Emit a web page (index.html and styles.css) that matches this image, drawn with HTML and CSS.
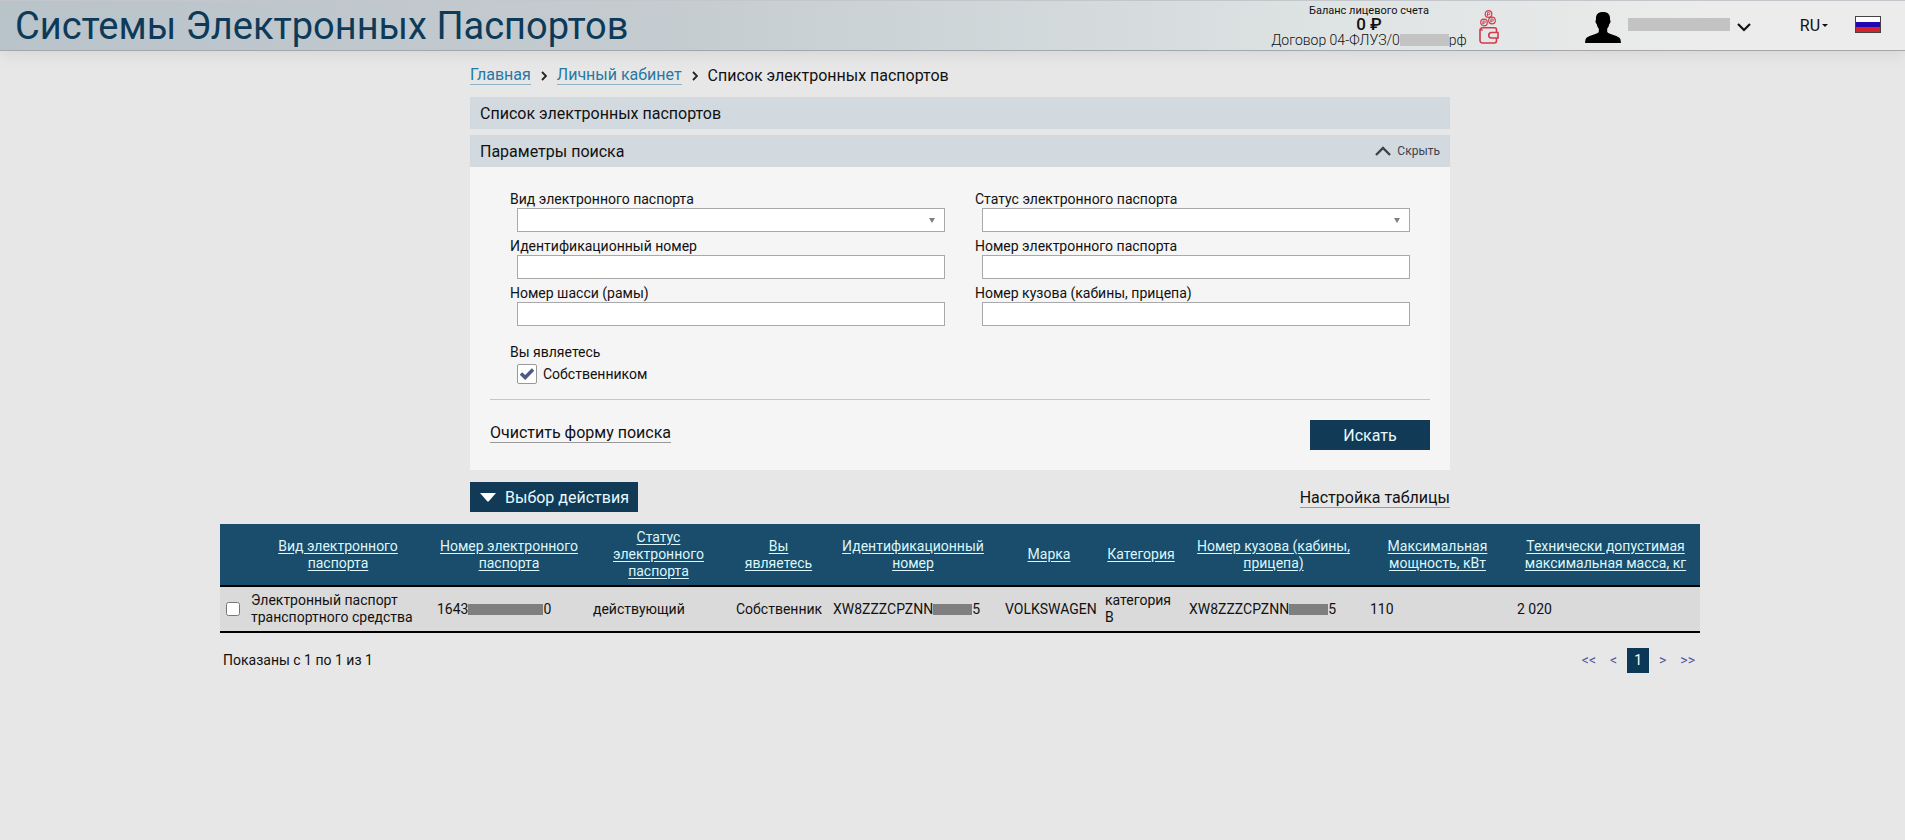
FILE: index.html
```html
<!DOCTYPE html>
<html lang="ru">
<head>
<meta charset="utf-8">
<title>Список электронных паспортов</title>
<link rel="stylesheet" href="styles.css">
</head>
<body>
<header class="topbar">
  <div class="brand">Системы Электронных Паспортов</div>
  <div class="balance">
    <div class="balance-text">
      <span class="balance-label">Баланс лицевого счета</span>
      <strong class="balance-value">0 ₽</strong>
      <span class="balance-contract">Договор 04-ФЛУЗ/0<span class="mask mask-contract"></span>рф</span>
    </div>
    <svg class="wallet" viewBox="0 0 20 34" fill="none" stroke="#cf3c4b" stroke-width="1.2">
      <circle cx="9.500" cy="4" r="3.300"/><circle cx="5" cy="12.500" r="3.300"/><circle cx="13" cy="10.500" r="3.300"/>
      <path stroke-width=".9" d="M8.500 6V2.500h1.300a1 1 0 0 1 0 2.200H7.800M4 14.500V11h1.300a1 1 0 0 1 0 2.200H3.300M12 12.500V9h1.300a1 1 0 0 1 0 2.200h-2"/>
      <path stroke-width="1.600" d="M17.500 22v-2.200a2 2 0 0 0-2-2H3.200a2.200 2.200 0 0 0-2.200 2.200v10.500A2.500 2.500 0 0 0 3.500 33h11.800a2.200 2.200 0 0 0 2.200-2.200v-2.600M1.200 18.600q.5 1.600 2.500 1.600M19 22.500h-6.500a2.700 2.700 0 0 0 0 5.500H19z"/>
    </svg>
  </div>
  <button class="user" type="button" aria-label="Меню пользователя">
    <svg class="avatar" viewBox="0 0 36 31"><path d="M18 0c5 0 7.500 2.500 7 8 .9.300.8 3-.8 4.200-.5 2.500-1.200 3.600-2 4.300V20c2 2.600 12.300 3.300 13.300 7.500L36 31H0l.5-3.500C1.500 23.300 11.800 22.600 13.800 20v-3.500c-.8-.7-1.500-1.800-2-4.300-1.600-1.200-1.700-3.900-.8-4.200C10.500 2.500 13 0 18 0z"/></svg>
    <span class="mask mask-user"></span>
    <svg class="chev" viewBox="0 0 14 9" fill="none" stroke="#111" stroke-width="2.200"><path d="M1 1l6 6 6-6"/></svg>
  </button>
  <button class="lang" type="button">RU<span class="caret"></span></button>
  <span class="flag" role="img" aria-label="Россия"></span>
</header>

<main>
  <div class="content">
    <nav class="crumbs">
      <a href="#">Главная</a>
      <svg class="sep" viewBox="0 0 6 10" fill="none" stroke="#222" stroke-width="1.800"><path d="M1 1l4 4-4 4"/></svg>
      <a href="#">Личный кабинет</a>
      <svg class="sep" viewBox="0 0 6 10" fill="none" stroke="#222" stroke-width="1.800"><path d="M1 1l4 4-4 4"/></svg>
      <span>Список электронных паспортов</span>
    </nav>
    <h1 class="bar">Список электронных паспортов</h1>
    <div class="bar">
      <span>Параметры поиска</span>
      <button class="toggle" type="button"><svg class="up" viewBox="0 0 16 10" fill="none" stroke="#3b434b" stroke-width="2.400"><path d="M1 9l7-7 7 7"/></svg>Скрыть</button>
    </div>
    <form class="panel">
      <div class="fields">
        <div class="field"><label for="kind">Вид электронного паспорта</label>
          <div class="select-wrap"><select id="kind"><option></option></select></div></div>
        <div class="field"><label for="status">Статус электронного паспорта</label>
          <div class="select-wrap"><select id="status"><option></option></select></div></div>
        <div class="field"><label for="vin">Идентификационный номер</label><input id="vin" type="text"></div>
        <div class="field"><label for="number">Номер электронного паспорта</label><input id="number" type="text"></div>
        <div class="field"><label for="chassis">Номер шасси (рамы)</label><input id="chassis" type="text"></div>
        <div class="field"><label for="cab">Номер кузова (кабины, прицепа)</label><input id="cab" type="text"></div>
      </div>
      <fieldset class="role">
        <legend>Вы являетесь</legend>
        <label class="check"><span class="box"><input type="checkbox" checked><svg class="tick" viewBox="0 0 14 12" fill="none" stroke="#4d5a83" stroke-width="3.400"><path d="M1 5.500l4.200 4L13 1.500"/></svg></span>Собственником</label>
      </fieldset>
      <div class="panel-actions">
        <a class="dark-link" href="#">Очистить форму поиска</a>
        <button class="btn search" type="submit">Искать</button>
      </div>
    </form>
    <div class="table-actions">
      <button class="btn action" type="button"><svg class="down" viewBox="0 0 16 10" fill="#fff"><path d="M0 1h16L8.800 9.200q-.8.800-1.600 0z"/></svg>Выбор действия</button>
      <a class="dark-link" href="#">Настройка таблицы</a>
    </div>
  </div>

  <section class="results">
    <table class="grid">
      <colgroup><col class="c-check"><col class="c-kind"><col class="c-num"><col class="c-status"><col class="c-role"><col class="c-vin"><col class="c-make"><col class="c-cat"><col class="c-body"><col class="c-power"><col class="c-mass"></colgroup>
      <thead>
        <tr>
          <th></th>
          <th><a href="#">Вид электронного паспорта</a></th>
          <th><a href="#">Номер электронного паспорта</a></th>
          <th><a href="#">Статус электронного паспорта</a></th>
          <th><a href="#">Вы<br>являетесь</a></th>
          <th><a href="#">Идентификационный номер</a></th>
          <th><a href="#">Марка</a></th>
          <th><a href="#">Категория</a></th>
          <th><a href="#">Номер кузова (кабины, прицепа)</a></th>
          <th><a href="#">Максимальная мощность, кВт</a></th>
          <th><a href="#">Технически допустимая максимальная масса, кг</a></th>
        </tr>
      </thead>
      <tbody>
        <tr>
          <td><input class="row-check" type="checkbox" aria-label="Выбрать паспорт"></td>
          <td>Электронный паспорт транспортного средства</td>
          <td class="nowrap">1643<span class="mask mask-num"></span>0</td>
          <td>действующий</td>
          <td class="nowrap">Собственник</td>
          <td class="nowrap">XW8ZZZCPZNN<span class="mask mask-vin"></span>5</td>
          <td class="nowrap">VOLKSWAGEN</td>
          <td>категория B</td>
          <td class="nowrap">XW8ZZZCPZNN<span class="mask mask-vin"></span>5</td>
          <td>110</td>
          <td>2 020</td>
        </tr>
      </tbody>
    </table>
    <div class="footer">
      <span>Показаны с 1 по 1 из 1</span>
      <nav class="pager">
        <a href="#">&lt;&lt;</a><a href="#">&lt;</a><a class="current" href="#">1</a><a href="#">&gt;</a><a href="#">&gt;&gt;</a>
      </nav>
    </div>
  </section>
</main>
</body>
</html>
```
FILE: styles.css
```css
* { box-sizing: border-box; }
body {
  margin: 0;
  background: #e7e7e7;
  color: #111;
  font: 14px/17px Roboto, "Noto Sans", sans-serif;
}
button, input, select { font: inherit; color: inherit; }
button { border: 0; padding: 0; background: none; cursor: pointer; }
a { text-decoration: none; }

.topbar {
  display: flex;
  align-items: center;
  height: 51px;
  padding: 0 24px 0 15px;
  border-top: 1px solid #c3c6ca;
  border-bottom: 1px solid #a4a7ac;
  background: linear-gradient(90deg, #b9c3ca, #c5ccd0 35%, #d2d9db 55%, #dee3e3 70%, #ececec 90%);
  box-shadow: 0 2px 14px #d2d2d4;
}
.brand { flex: 1; color: #0c3a58; font-size: 38px; line-height: 48px; white-space: nowrap; }
.balance { display: flex; align-items: center; gap: 12px; margin-right: 86px; }
.balance-text { display: flex; flex-direction: column; align-items: center; height: 42px; overflow: hidden; white-space: nowrap; }
.balance-label { font-size: 11px; line-height: 12px; }
.balance-value { font-size: 17px; line-height: 15px; font-weight: 500; }
.balance-contract { font-weight: 300; line-height: 17px; }
.wallet { width: 20px; height: 34px; margin-top: 3px; }
.mask { display: inline-block; background: #7f7f7f; }
.mask-contract { width: 49px; height: 12px; background: #c3c3c3; vertical-align: -1px; }
.mask-user { width: 102px; height: 13px; margin-bottom: 2px; background: #c3c3c3; }
.user { display: flex; align-items: center; gap: 7px; margin-right: 49px; }
.avatar { width: 36px; height: 31px; margin-top: 4px; }
.chev { width: 14px; height: 9px; margin-top: 4px; }
.lang { display: flex; align-items: center; gap: 2px; margin-right: 27px; font: 16px/20px Roboto, sans-serif; }
.caret { border: 3px solid transparent; border-top-color: #111; border-bottom: 0; }
.flag {
  width: 26px;
  height: 17px;
  margin-bottom: 2px;
  border: 1px solid #444;
  background: linear-gradient(#fff 33%, #2108b0 33% 66%, #d3222c 66%);
}

main { padding-left: 15px; }
.content { width: 980px; max-width: 100%; margin: 0 auto; }
.crumbs { display: flex; align-items: center; height: 46px; padding-top: 3px; font-size: 16px; }
.crumbs a { color: #2878a3; border-bottom: 1px solid #8fb4c8; line-height: 18px; }
.sep { width: 6px; height: 10px; margin: 0 10px; }
.bar {
  display: flex;
  align-items: center;
  justify-content: space-between;
  height: 32px;
  margin: 0 0 6px;
  padding: 0 10px;
  background: #d2dadf;
  font-size: 16px;
  font-weight: 400;
}
.toggle { display: flex; align-items: center; gap: 6px; color: #3b434b; font-size: 12px; }
.up { width: 16px; height: 10px; }
.panel { margin-top: -6px; padding: 20px; background: #f5f5f5; }
.fields { display: grid; grid-template-columns: 1fr 1fr; column-gap: 30px; padding: 0 20px; }
.field { display: flex; flex-direction: column; }
.field label { padding-top: 4px; line-height: 17px; }
.field input, .select-wrap { height: 24px; margin: 0 0 2px 7px; }
.field input, .select-wrap select { width: auto; padding: 0 6px; border: 1px solid #a9a9a9; border-radius: 0; background: #fff; }
.select-wrap { display: grid; position: relative; }
.select-wrap select { appearance: none; }
.select-wrap::after {
  content: "";
  position: absolute;
  right: 10px;
  top: 10px;
  border: 3px solid transparent;
  border-top: 5px solid #808080;
  border-bottom: 0;
  pointer-events: none;
}
.role { margin: 0; padding: 13px 20px 15px; border: 0; border-bottom: 1px solid #c6c6c6; }
.role legend { float: left; width: 100%; padding: 0 0 1px; line-height: 22px; }
.check { display: flex; align-items: center; gap: 6px; margin-left: 7px; clear: both; }
.box { display: grid; place-items: center; width: 20px; height: 20px; }
.box input { grid-area: 1 / 1; appearance: none; width: 20px; height: 20px; margin: 0; border: 1px solid #999; border-radius: 2px; background: #fff; }
.tick { grid-area: 1 / 1; width: 14px; height: 12px; z-index: 1; pointer-events: none; }
.panel-actions { display: flex; justify-content: space-between; align-items: flex-start; padding-top: 20px; }
.dark-link { color: #111; font-size: 16px; line-height: 19px; border-bottom: 1px solid #999; }
.panel-actions .dark-link { margin-top: 3px; }
.table-actions .dark-link { margin-top: 2px; }
.btn { height: 30px; background: #113a57; color: #e6fbff; font-size: 16px; }
.search { width: 120px; }
.table-actions { display: flex; justify-content: space-between; align-items: center; padding: 12px 0; }
.action { display: flex; align-items: center; gap: 9px; padding: 0 9px 0 10px; }
.down { width: 16px; height: 10px; }

.results { max-width: 1480px; margin: 0 auto; }
.grid { width: 100%; table-layout: fixed; border-collapse: collapse; }
.grid th { height: 62px; padding: 4px 6px; background: #194d6b; color: #dcf6fb; font-weight: 400; border-bottom: 2px solid #000; }
.grid th a { color: inherit; text-decoration: underline; text-underline-offset: 2px; }
.grid td { height: 46px; padding: 4px 6px; background: #dadada; border-bottom: 2px solid #000; }
.nowrap { white-space: nowrap; }
.c-check { width: 25px; } .c-kind { width: 186px; } .c-num { width: 156px; }
.c-status { width: 143px; } .c-role { width: 97px; } .c-vin { width: 172px; }
.c-make { width: 100px; } .c-cat { width: 84px; } .c-body { width: 181px; }
.c-power { width: 147px; } .c-mass { width: 189px; }
.row-check { display: block; width: 14px; height: 14px; margin: 0; }
.mask-num { width: 75px; height: 11px; vertical-align: -1px; }
.mask-vin { width: 39px; height: 11px; vertical-align: -1px; }
.footer { display: flex; justify-content: space-between; align-items: center; padding: 15px 0 15px 3px; }
.pager { display: flex; align-items: center; color: #5257a5; }
.pager a { padding: 0 5px; color: inherit; line-height: 25px; }
.pager a + a { margin-left: 4px; }
.pager .current { margin-right: 1px; margin-left: 5px; padding: 0 7px; background: #0b3857; color: #fff; }
```
